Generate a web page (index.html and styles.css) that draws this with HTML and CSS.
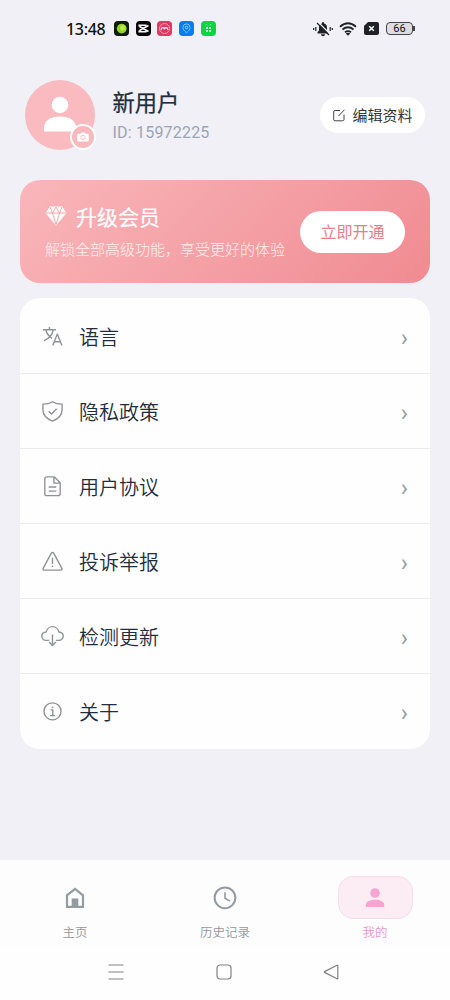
FILE: index.html
```
<!DOCTYPE html>
<html lang="zh-CN">
<head>
<meta charset="utf-8">
<title>我的</title>
<link rel="stylesheet" href="styles.css">
</head>
<body>
<div class="screen">
  <header class="status">
    <span class="time">13:48</span>
    <div class="apps">
      <svg viewBox="0 0 15 15"><rect width="15" height="15" rx="4" fill="#10190c"/><circle cx="7.7" cy="7.6" r="4.9" fill="#8fd522"/><circle cx="8.8" cy="7" r="2.8" fill="#b4e84d"/></svg>
      <svg viewBox="0 0 15 15"><rect width="15" height="15" rx="4" fill="#050505"/><path d="M12.500 4.500 3.500 9.500M12.500 10.500 3.500 5.500M3.200 5.500V4.200h7.300M3.200 9.500v1.300h7.300" fill="none" stroke="#fff" stroke-width="1.500"/></svg>
      <svg viewBox="0 0 15 15"><rect width="15" height="15" rx="4" fill="#e33861"/><circle cx="7.500" cy="7.500" r="5" fill="none" stroke="#ffb7c6" stroke-width=".8"/><path d="M4 9c.5-3 3-3 3.500-1C8 6 10.500 6 11 9" fill="none" stroke="#fff" stroke-width="1.100"/></svg>
      <svg viewBox="0 0 15 15"><rect width="15" height="15" rx="4" fill="#087cf4"/><path d="M7.500 12C5 9.700 4 8.300 4 6.400a3.500 3.500 0 0 1 7 0C11 8.300 10 9.700 7.500 12Z" fill="none" stroke="#91c9ff" stroke-width=".9"/><circle cx="7.500" cy="6.500" r="1.300" fill="none" stroke="#b9ddff" stroke-width=".8"/></svg>
      <svg viewBox="0 0 15 15"><rect width="15" height="15" rx="4" fill="#09d641"/><path d="m5 3 1 1.500M10 3 9 4.500" stroke="#77ef91"/><path d="M5 6h2v2H5zM8 6h2v2H8zM5 9h2v2H5zM8 9h2v2H8z" fill="#d8ffe0"/></svg>
    </div>
    <div class="signals">
      <svg class="bell" viewBox="0 0 20 16"><path d="M4.500 12.500V11L6 9.500V6.500a4 4 0 0 1 3-4V1.300h2v1.200a4 4 0 0 1 3 4v3l1.500 1.500v1.500ZM8 13.300h4a2 2 0 0 1-4 0Z" fill="#202126"/><path d="m5 1 12 12" stroke="#f1f0f6" stroke-width="1.200"/><path d="m4 2 12 12M2.800 6v4M.7 7v2M17.200 6v4M19.300 7v2" stroke="#202126" stroke-width="1.200"/></svg>
      <svg class="wifi" viewBox="0 0 18 14"><path d="M1 4.700Q9-2.300 17 4.700M3.500 7.500Q9 3 14.500 7.500M6 10.200Q9 8 12 10.200" fill="none" stroke="#202126" stroke-width="1.800"/><path d="m6.700 11.500 2.300 2.300 2.300-2.300Q9 10.200 6.700 11.500Z" fill="#202126"/></svg>
      <svg class="sim" viewBox="0 0 15 13"><path d="M4 0h9a2 2 0 0 1 2 2v9a2 2 0 0 1-2 2H2a2 2 0 0 1-2-2V4Z" fill="#202126"/><path d="m5.200 4.200 4.600 4.600M9.800 4.200 5.200 8.800" stroke="#fff" stroke-width="1.500"/></svg>
      <span class="battery">66</span>
    </div>
  </header>

  <section class="profile">
    <div class="avatar">
      <svg class="person" viewBox="0 0 32 36"><circle cx="16" cy="9" r="8.300" fill="#fff"/><path d="M0 35.500v-3.500C0 25 6 20.500 16 20.500S32 25 32 32v3.500Z" fill="#fff"/></svg>
      <span class="camera"><svg viewBox="0 0 12 10"><path d="M1 1.700h2.500L4.400.4h3.200l.9 1.300H11a.8.8 0 0 1 .8.800v6.200a.8.8 0 0 1-.8.800H1a.8.8 0 0 1-.8-.8V2.500a.8.8 0 0 1 .8-.8Z" fill="#fff"/><circle cx="6" cy="5.500" r="2.200" fill="none" stroke="#f8b8bc" stroke-width=".9"/></svg></span>
    </div>
    <div class="identity"><h1>新用户</h1><p>ID: 15972225</p></div>
    <div class="edit"><svg viewBox="0 0 14 14"><path d="M8 2.500H3A1.300 1.300 0 0 0 1.700 3.800v7.700a1.300 1.300 0 0 0 1.300 1.300h7.700a1.300 1.300 0 0 0 1.300-1.300V6.500M6.500 8l6-6.300" fill="none" stroke="#444" stroke-width="1"/></svg>编辑资料</div>
  </section>

  <section class="banner">
    <div>
      <h2><svg viewBox="0 0 22 20"><path d="M5 .5h12L21.500 7 11 19.500.5 7Z" fill="#fff"/><path d="M1 7h20M5 1l2.500 6L11 1l3.500 6L17 1M7.500 7 11 18.500 14.500 7" fill="none" stroke="#f6a5aa" stroke-width="1"/></svg>升级会员</h2>
      <p>解锁全部高级功能，享受更好的体验</p>
    </div>
    <span class="open">立即开通</span>
  </section>

  <main class="menu">
    <div class="row"><svg viewBox="0 0 24 24"><path d="M2 5h13.500M8.800 2v3M12.800 5C12 9.500 8.500 14 3 16.500M5 5C6 9 8.500 12 11.500 14M12.300 21.500 17 9.500l4.800 12M14 17.500h6"/></svg><span>语言</span><i>›</i></div>
    <div class="row"><svg viewBox="0 0 24 24"><path d="M12 1.800c2.700 1.800 6.300 2.500 10 2.500v5.900c0 5.400-4 9.500-10 11.800-6-2.300-10-6.400-10-11.800V4.300c3.700 0 7.300-.7 10-2.500ZM8 11.700l3 3 5.300-5.500"/></svg><span>隐私政策</span><i>›</i></div>
    <div class="row"><svg viewBox="0 0 24 24"><path d="M6 2h8l6 6v11.500a2 2 0 0 1-2 2H6a2 2 0 0 1-2-2V4a2 2 0 0 1 2-2ZM13.500 2V8.500H20M8 12.500h8M8 16.800h8"/></svg><span>用户协议</span><i>›</i></div>
    <div class="row"><svg viewBox="0 0 24 24"><path d="M10.800 3.200 2.200 19.100a1.300 1.300 0 0 0 1.200 1.900h17.200a1.300 1.300 0 0 0 1.200-1.900L13.200 3.200a1.400 1.400 0 0 0-2.400 0ZM12 8v6.500M12 16.300v1.500"/></svg><span>投诉举报</span><i>›</i></div>
    <div class="row"><svg viewBox="0 0 24 24"><path d="M8.500 16H5.300a4.300 4.300 0 0 1-.3-8.700h.4a6.700 6.700 0 0 1 13.200 0H19a4.300 4.300 0 0 1-.3 8.700H15.500M12 10v11M8.500 17.800 12 21.300l3.500-3.500"/></svg><span>检测更新</span><i>›</i></div>
    <div class="row"><svg viewBox="0 0 24 24"><circle cx="12" cy="10.800" r="8.900"/><path d="M10 9.300h2.300v6M9.500 15.300h5.300M12 5.800v1.700"/></svg><span>关于</span><i>›</i></div>
  </main>

  <nav class="tabs">
    <div class="tab"><span class="pill"><svg viewBox="0 0 24 24"><path d="M4 9.300 12 3l8 6.300v11.500H4Z" fill="none" stroke="#929ca1" stroke-width="2.200"/><path d="M8.700 12.500h6.600V21H8.700z" fill="#929ca1"/></svg></span>主页</div>
    <div class="tab"><span class="pill"><svg viewBox="0 0 24 24"><circle cx="12" cy="11.800" r="10.400" fill="none" stroke="#929ca1" stroke-width="2"/><path d="M12 6.300v6l5 2.800" fill="none" stroke="#929ca1" stroke-width="1.600"/></svg></span>历史记录</div>
    <div class="tab active"><span class="pill"><svg viewBox="0 0 24 24"><circle cx="12" cy="7" r="4.800" fill="#f5a5d2"/><path d="M2.800 21v-2.200C2.800 15.700 7 13.700 12 13.700s9.200 2 9.200 5.100V21Z" fill="#f5a5d2"/></svg></span>我的</div>
  </nav>
  <footer class="system">
    <svg viewBox="0 0 16 16"><path d="M.5 1h15M.5 8h15M.5 15h15"/></svg>
    <svg viewBox="0 0 16 16"><rect x="1" y="1" width="14" height="14" rx="3"/></svg>
    <svg viewBox="0 0 16 16"><path d="M14 1.200a.5.500 0 0 1 .8.500v12.600a.5.500 0 0 1-.8.500L1.500 8.400a.5.500 0 0 1 0-.8Z"/></svg>
  </footer>
</div>
</body>
</html>
```
FILE: styles.css
```
* { box-sizing: border-box; }
body { margin: 0; background: #f1f0f6; color: #1f2d3d; font-family: Roboto, "Noto Sans CJK SC", sans-serif; }
h1, h2, p { margin: 0; font-weight: 400; }
svg { display: block; flex: none; }
.screen { width: 450px; height: 1000px; display: flex; flex-direction: column; }
.status { height: 57px; padding: 0 37px 0 66px; display: flex; align-items: center; color: #111; }
.time { font: 500 16px "Noto Sans", sans-serif; width: 48px; letter-spacing: -.3px; }
.apps { display: flex; gap: 6.7px; }
.apps svg { width: 15px; height: 15px; }
.signals { margin-left: auto; display: flex; align-items: center; }
.bell { width: 20px; height: 16px; margin-right: 6px; }
.wifi { width: 18px; height: 14px; margin-right: 7px; }
.sim { width: 15px; height: 13px; margin-right: 7px; }
.battery { width: 27px; height: 13px; border: 1px solid #44454a; border-radius: 4px; background: #dcdce1; font: 400 11px/12px Roboto, sans-serif; text-align: center; position: relative; }
.battery::after { content: ""; position: absolute; right: -3px; top: 3px; width: 2px; height: 5px; background: #44454a; }
.profile { margin: 23px 25px 0; height: 70px; display: flex; align-items: center; }
.avatar { width: 70px; height: 70px; border-radius: 50%; background: #f9bbbf; position: relative; padding: 16px 0 0 19px; }
.person { width: 32px; height: 36px; }
.camera { position: absolute; right: -1px; bottom: 0; width: 26px; height: 26px; border: 2px solid #fff; border-radius: 50%; background: #f8b8bc; display: grid; place-items: center; }
.camera svg { width: 12px; height: 10px; }
.identity { margin-left: 17.500px; }
.identity h1 { font-size: 22.300px; line-height: 32px; -webkit-text-stroke: .25px currentColor; }
.identity p { font-size: 16px; line-height: 20px; margin-top: 4px; letter-spacing: .2px; color: #9aa5b7; }
.edit { margin-left: auto; width: 105px; height: 36px; border-radius: 18px; background: #fff; color: #333; display: flex; align-items: center; justify-content: center; gap: 6px; font-size: 15px; line-height: 20px; padding-top: 1px; }
.edit svg { width: 14px; height: 14px; margin-top: -1px; }
.banner { margin: 30px 20px 0; height: 103px; border-radius: 20px; padding: 0 25px; display: flex; align-items: center; justify-content: space-between; color: #fff; background: linear-gradient(135deg, #f9b7bb, #f08b91); white-space: nowrap; }
.banner h2 { display: flex; align-items: center; gap: 9px; font-size: 21px; line-height: 30px; -webkit-text-stroke: .2px currentColor; }
.banner h2 svg { width: 22px; height: 20px; margin-top: -3px; }
.banner p { font-size: 15px; line-height: 22px; margin-top: 6px; color: #fff0f0; font-weight: 300; }
.banner > div { width: 250px; }
.open { width: 105px; height: 42px; border-radius: 21px; background: #fff; color: #e77f85; font-size: 16px; line-height: 43px; text-align: center; }
.menu { margin: 15px 20px 0; height: 451px; border-radius: 20px; background: #fefefe; padding-top: 1px; }
.row { height: 75px; padding: 1px 22px 0 21px; display: flex; align-items: center; border-bottom: 1px solid #ececef; font-size: 20px; font-weight: 350; }
.row > span { margin-top: -1px; }
.row:last-child { border: 0; }
.row svg { width: 23px; height: 23px; fill: none; stroke: #909296; stroke-width: 1.450; stroke-linejoin: round; margin: 0 15px 0 0; }
.row i { margin-left: auto; font: 24px Roboto, sans-serif; color: #939ca2; padding-top: 2px; }
.tabs { margin-top: auto; height: 87px; background: #fdfdfe; display: flex; padding-top: 16px; }
.tab { flex: 1; display: flex; flex-direction: column; align-items: center; color: #92989d; font-size: 12.500px; font-weight: 350; line-height: 20px; gap: 4px; }
.pill { width: 75px; height: 43px; border-radius: 15px; border: 1px solid transparent; display: grid; place-items: center; }
.pill svg { width: 24px; height: 24px; }
.active { color: #ed96c4; }
.active .pill { background: #fcedf5; border-color: #f9dcea; }
.system { height: 53px; background: #fefefe; padding: 17px 111px 0 108px; display: flex; justify-content: space-between; }
.system svg { width: 16px; height: 16px; fill: none; stroke: #828282; stroke-width: 1.200; }
```
